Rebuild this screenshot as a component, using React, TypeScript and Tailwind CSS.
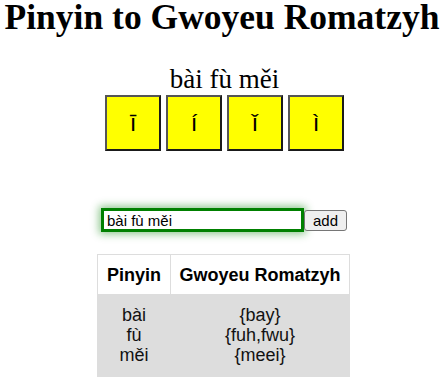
import React, { useEffect, useRef, useState } from 'react';

const tones = ['ī', 'í', 'ǐ', 'ì'];

const rows = [
  { pinyin: 'bài', gr: '{bay}' },
  { pinyin: 'fù', gr: '{fuh,fwu}' },
  { pinyin: 'měi', gr: '{meei}' },
];

export default function App() {
  const [text, setText] = useState('bài fù měi');
  const inputRef = useRef<HTMLInputElement>(null);

  useEffect(() => {
    const el = inputRef.current;
    if (el) {
      el.focus();
      el.setSelectionRange(el.value.length, el.value.length);
    }
  }, []);

  return (
    <div className="min-h-[377px] bg-white text-black font-['Liberation_Serif',serif]">
      <h1 className="m-0 text-center text-[35.5px] font-bold leading-[34px] whitespace-nowrap">Pinyin to Gwoyeu Romatzyh</h1>

      <div className="mt-[30px] pl-[5px] text-center text-[27px] leading-[31px]">{text}</div>

      {/* tone buttons */}
      <div className="flex justify-center gap-[5px] pl-[5px]">
        {tones.map((t) => (
          <div
            key={t}
            className="w-[56px] h-[56px] flex items-center justify-center bg-[#ffff00] border-2 border-t-[#555] border-l-[#555] border-r-[#1a1a1a] border-b-[#1a1a1a] font-['Liberation_Sans',sans-serif] text-2xl leading-[28px]"
          >
            {t}
          </div>
        ))}
      </div>

      {/* input row */}
      <div className="mt-[57px] pl-[4px] flex items-center justify-center font-['Liberation_Sans',sans-serif] text-[15px]">
        <input
          ref={inputRef}
          type="text"
          value={text}
          onChange={(e) => setText(e.target.value)}
          className="w-[203px] h-[24px] border-[3px] border-[#008000] px-[3px] outline-none shadow-[0_0_8px_2px_rgba(0,128,0,0.45)] text-[15px] leading-[17px]"
        />
        <button
          type="button"
          className="h-[21px] px-[8px] bg-[#efefef] border border-[#767676] rounded-[3px] text-[15px] leading-[17px]"
        >
          add
        </button>
      </div>

      {/* results */}
      <div className="mt-[22px] pl-[3px] flex justify-center">
        <table className="border-collapse font-['Liberation_Sans',sans-serif] text-[18px] leading-[20px]">
          <thead>
            <tr>
              <th className="border border-[#dddddd] bg-white px-[9px] py-[9.5px] font-bold">Pinyin</th>
              <th className="border border-[#dddddd] bg-white px-[8.5px] py-[9.5px] font-bold">Gwoyeu Romatzyh</th>
            </tr>
          </thead>
          <tbody>
            <tr className="bg-[#dddddd] text-[#111]">
              <td className="px-[9px] pt-[10px] pb-[12px] text-center">
                {rows.map((r) => (
                  <div key={r.pinyin}>{r.pinyin}</div>
                ))}
              </td>
              <td className="px-[8.5px] pt-[10px] pb-[12px] text-center">
                {rows.map((r) => (
                  <div key={r.pinyin}>{r.gr}</div>
                ))}
              </td>
            </tr>
          </tbody>
        </table>
      </div>
    </div>
  );
}
